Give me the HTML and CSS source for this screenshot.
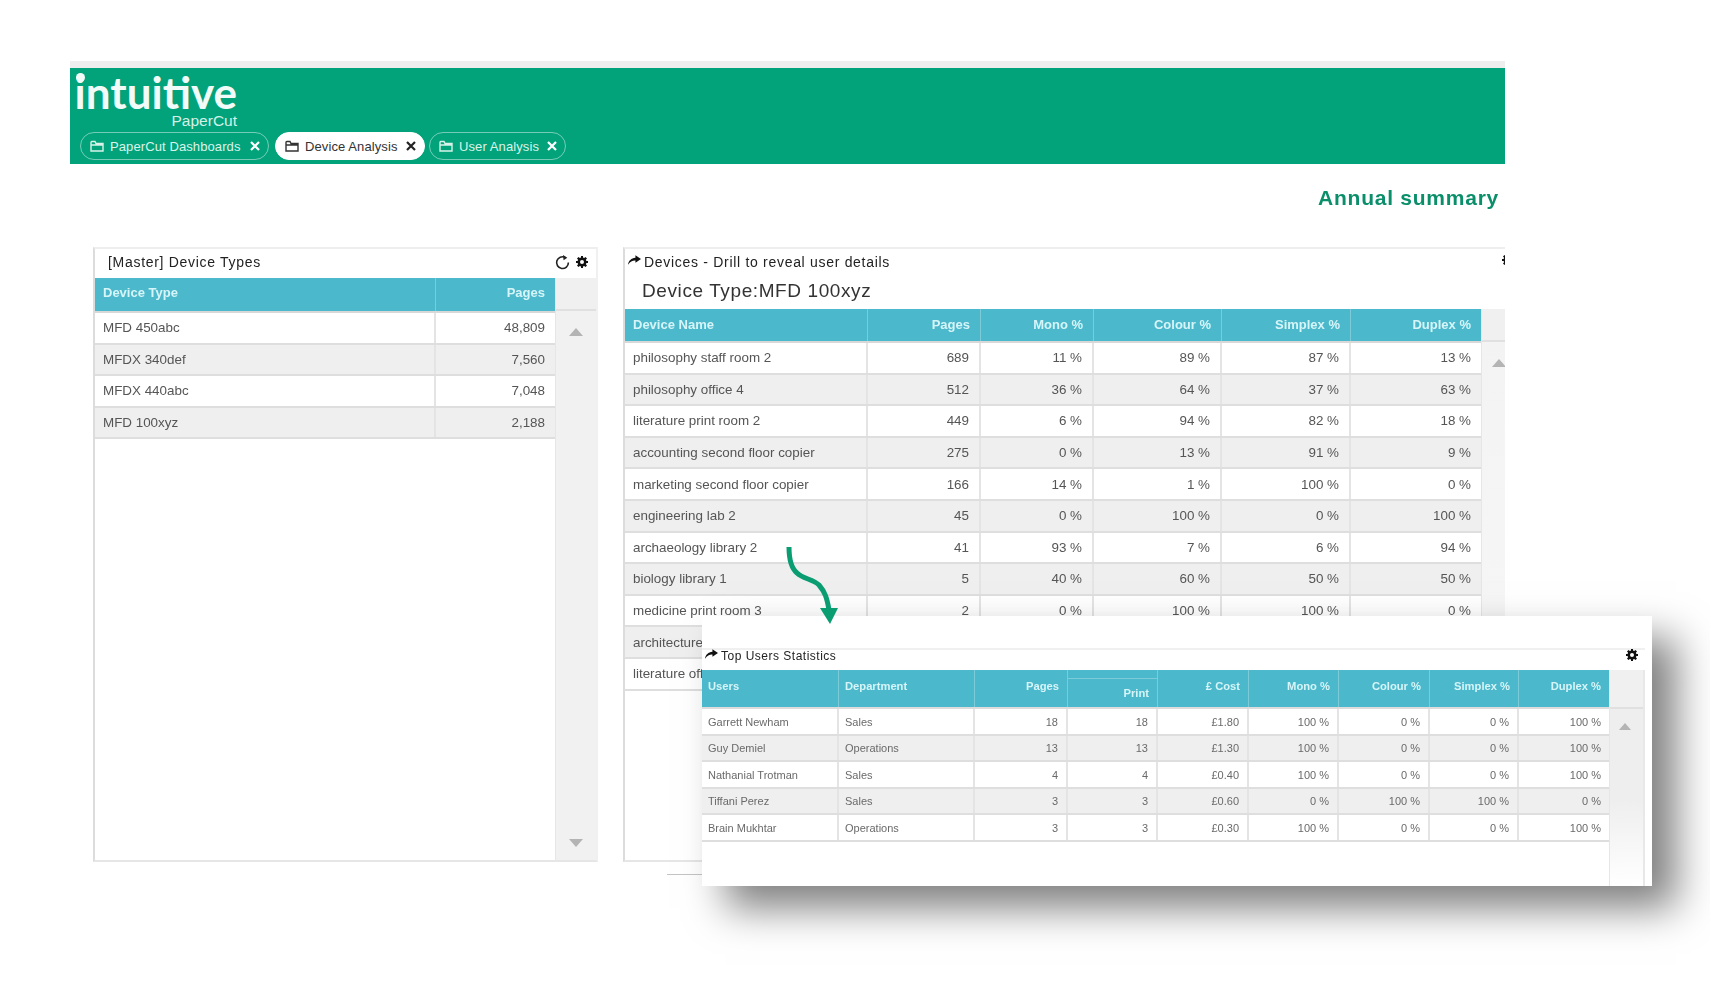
FILE: index.html
```html
<!DOCTYPE html>
<html lang="en">
<head>
<meta charset="utf-8">
<title>Intuitive PaperCut - Device Analysis</title>
<link rel="stylesheet" href="styles.css">
</head>
<body>
<svg class="defs" width="0" height="0" aria-hidden="true">
  <symbol id="folder" viewBox="0 0 14 12"><path d="M1 2.5V11h12V3.5H6L5 1.5H1.8Q1 1.5 1 2.5ZM1 5h12" fill="none" stroke="currentColor" stroke-width="1.4"/></symbol>
  <symbol id="close" viewBox="0 0 12 12"><path d="M2 2l8 8M10 2l-8 8" fill="none" stroke="currentColor" stroke-width="2.2"/></symbol>
  <symbol id="gear" viewBox="0 0 12 12"><path fill-rule="evenodd" d="M5 0h2v1.6l1.2.5L9.5 1 11 2.5 9.9 3.8l.5 1.2H12v2h-1.6l-.5 1.2L11 9.5 9.5 11 8.2 9.9 7 10.4V12H5v-1.6l-1.2-.5L2.500 11 1 9.500l1.100-1.300L1.600 7H0V5h1.600l.5-1.200L1 2.500 2.500 1l1.300 1.100L5 1.600ZM6 4a2 2 0 1 0 0 4 2 2 0 0 0 0-4Z" fill="currentColor"/></symbol>
  <symbol id="reply" viewBox="0 0 14 10"><path d="M8 0l6 4-6 4V5.500C5 5.300 2.500 6.500 0 10 .6 5.800 3.500 2.800 8 2.500Z" fill="currentColor"/></symbol>
  <symbol id="up" viewBox="0 0 14 8"><path d="M7 0l7 8H0Z" fill="currentColor"/></symbol>
  <symbol id="down" viewBox="0 0 14 8"><path d="M0 0h14L7 8Z" fill="currentColor"/></symbol>
</svg>

<main class="page">
  <div class="stripe"></div>
  <header class="banner">
    <div class="logo">
      <span class="logo-word">intuitive</span>
      <span class="logo-sub">PaperCut</span>
    </div>
    <nav class="tabs">
      <a class="tab tab-dash"><svg class="ico-folder"><use href="#folder"/></svg><span class="tab-label">PaperCut Dashboards</span><svg class="ico-close"><use href="#close"/></svg></a>
      <a class="tab tab-device active"><svg class="ico-folder"><use href="#folder"/></svg><span class="tab-label">Device Analysis</span><svg class="ico-close"><use href="#close"/></svg></a>
      <a class="tab tab-user"><svg class="ico-folder"><use href="#folder"/></svg><span class="tab-label">User Analysis</span><svg class="ico-close"><use href="#close"/></svg></a>
    </nav>
  </header>

  <h1 class="summary">Annual summary</h1>

  <div class="panels">
    <section class="panel panel-types">
      <div class="panel-title title-types">
        <span class="title-text">[Master] Device Types</span>
        <span class="panel-tools">
          <svg class="ico-refresh" viewBox="0 0 14 14"><path d="M9.500 2.200A5.500 5.500 0 1 0 12.500 7" fill="none" stroke="currentColor" stroke-width="1.500"/><path d="M7.500 0l4 2.500-3.500 2.500Z" fill="currentColor"/></svg>
          <svg class="ico-gear"><use href="#gear"/></svg>
        </span>
      </div>
      <div class="panel-body">
        <div class="table">
          <div class="row head cols-types"><span>Device Type</span><span class="num">Pages</span></div>
          <div class="rows big">
            <div class="row cols-types"><span>MFD 450abc</span><span class="num">48,809</span></div>
            <div class="row cols-types"><span>MFDX 340def</span><span class="num">7,560</span></div>
            <div class="row cols-types"><span>MFDX 440abc</span><span class="num">7,048</span></div>
            <div class="row cols-types"><span>MFD 100xyz</span><span class="num">2,188</span></div>
          </div>
        </div>
        <aside class="scroll scroll-types">
          <div class="scroll-head head-types"></div>
          <svg class="arrow-up arrow-types"><use href="#up"/></svg>
          <svg class="arrow-down"><use href="#down"/></svg>
        </aside>
      </div>
    </section>

    <section class="panel panel-devices">
      <div class="panel-title title-devices">
        <svg class="ico-reply"><use href="#reply"/></svg>
        <span class="title-text">Devices - Drill to reveal user details</span>
        <svg class="ico-gear gear-clipped"><use href="#gear"/></svg>
      </div>
      <h2 class="subtitle">Device Type:MFD 100xyz</h2>
      <div class="panel-body">
        <div class="table">
          <div class="row head cols-devices"><span>Device Name</span><span class="num">Pages</span><span class="num">Mono %</span><span class="num">Colour %</span><span class="num">Simplex %</span><span class="num">Duplex %</span></div>
          <div class="rows big">
            <div class="row cols-devices"><span>philosophy staff room 2</span><span class="num">689</span><span class="num">11 %</span><span class="num">89 %</span><span class="num">87 %</span><span class="num">13 %</span></div>
            <div class="row cols-devices"><span>philosophy office 4</span><span class="num">512</span><span class="num">36 %</span><span class="num">64 %</span><span class="num">37 %</span><span class="num">63 %</span></div>
            <div class="row cols-devices"><span>literature print room 2</span><span class="num">449</span><span class="num">6 %</span><span class="num">94 %</span><span class="num">82 %</span><span class="num">18 %</span></div>
            <div class="row cols-devices"><span>accounting second floor copier</span><span class="num">275</span><span class="num">0 %</span><span class="num">13 %</span><span class="num">91 %</span><span class="num">9 %</span></div>
            <div class="row cols-devices"><span>marketing second floor copier</span><span class="num">166</span><span class="num">14 %</span><span class="num">1 %</span><span class="num">100 %</span><span class="num">0 %</span></div>
            <div class="row cols-devices"><span>engineering lab 2</span><span class="num">45</span><span class="num">0 %</span><span class="num">100 %</span><span class="num">0 %</span><span class="num">100 %</span></div>
            <div class="row cols-devices"><span>archaeology library 2</span><span class="num">41</span><span class="num">93 %</span><span class="num">7 %</span><span class="num">6 %</span><span class="num">94 %</span></div>
            <div class="row cols-devices"><span>biology library 1</span><span class="num">5</span><span class="num">40 %</span><span class="num">60 %</span><span class="num">50 %</span><span class="num">50 %</span></div>
            <div class="row cols-devices"><span>medicine print room 3</span><span class="num">2</span><span class="num">0 %</span><span class="num">100 %</span><span class="num">100 %</span><span class="num">0 %</span></div>
            <div class="row cols-devices"><span>architecture</span><span class="num"></span><span class="num"></span><span class="num"></span><span class="num"></span><span class="num"></span></div>
            <div class="row cols-devices"><span>literature office</span><span class="num"></span><span class="num"></span><span class="num"></span><span class="num"></span><span class="num"></span></div>
          </div>
        </div>
        <aside class="scroll scroll-devices">
          <div class="scroll-head head-devices"></div>
          <svg class="arrow-up arrow-devices"><use href="#up"/></svg>
        </aside>
      </div>
    </section>
  </div>

  <svg class="flow-arrow" viewBox="0 0 60 84" aria-hidden="true">
    <path d="M5 1C5 14 7 22 13 27 19 33 29 33 35 39 41 46 43 52 45 64" fill="none" stroke="#0a9d72" stroke-width="5"/>
    <path d="M36 62h18l-8 16Z" fill="#0a9d72"/>
  </svg>
  <div class="stub-line"></div>

  <section class="popup">
    <div class="popup-gap"></div>
    <div class="popup-inner">
      <div class="panel-title title-popup">
        <svg class="ico-reply"><use href="#reply"/></svg>
        <span class="title-text">Top Users Statistics</span>
        <svg class="ico-gear gear-popup"><use href="#gear"/></svg>
      </div>
      <div class="panel-body popup-body">
        <div class="table">
          <div class="row head head-users cols-users"><span>Users</span><span>Department</span><span class="num">Pages</span><span class="num print-head">Print</span><span class="num">£ Cost</span><span class="num">Mono %</span><span class="num">Colour %</span><span class="num">Simplex %</span><span class="num">Duplex %</span></div>
          <div class="rows small">
            <div class="row cols-users"><span>Garrett Newham</span><span>Sales</span><span class="num">18</span><span class="num">18</span><span class="num">£1.80</span><span class="num">100 %</span><span class="num">0 %</span><span class="num">0 %</span><span class="num">100 %</span></div>
            <div class="row cols-users"><span>Guy Demiel</span><span>Operations</span><span class="num">13</span><span class="num">13</span><span class="num">£1.30</span><span class="num">100 %</span><span class="num">0 %</span><span class="num">0 %</span><span class="num">100 %</span></div>
            <div class="row cols-users"><span>Nathanial Trotman</span><span>Sales</span><span class="num">4</span><span class="num">4</span><span class="num">£0.40</span><span class="num">100 %</span><span class="num">0 %</span><span class="num">0 %</span><span class="num">100 %</span></div>
            <div class="row cols-users"><span>Tiffani Perez</span><span>Sales</span><span class="num">3</span><span class="num">3</span><span class="num">£0.60</span><span class="num">0 %</span><span class="num">100 %</span><span class="num">100 %</span><span class="num">0 %</span></div>
            <div class="row cols-users"><span>Brain Mukhtar</span><span>Operations</span><span class="num">3</span><span class="num">3</span><span class="num">£0.30</span><span class="num">100 %</span><span class="num">0 %</span><span class="num">0 %</span><span class="num">100 %</span></div>
          </div>
        </div>
        <aside class="scroll scroll-popup">
          <div class="scroll-head head-popup"></div>
          <svg class="arrow-up arrow-popup"><use href="#up"/></svg>
        </aside>
      </div>
    </div>
  </section>
</main>
</body>
</html>
```
FILE: styles.css
```css
* { box-sizing: border-box; }
html, body { margin: 0; padding: 0; background: #fff; overflow: hidden; }
body { width: 1710px; height: 1001px; font-family: "Liberation Sans", Arial, sans-serif; color: #333; }
.defs { position: absolute; }

.page { position: relative; width: 1710px; height: 1001px; padding: 61px 205px 0 70px; filter: blur(0.6px); }
.stripe { height: 7px; background: #eeeeee; }

.banner { height: 96px; background: #02a37b; padding: 6px 0 0 4px; display: flex; flex-direction: column; }
.logo { width: 163px; height: 58px; display: flex; flex-direction: column; align-items: flex-end; color: #f2fbf8; }
.logo-word { position: relative; font-family: "Lato", sans-serif; font-weight: 700; font-size: 44px; line-height: 36px; letter-spacing: 0; }
.logo-word::before { content: ""; position: absolute; left: 1px; top: -1px; width: 9px; height: 9px; border-radius: 50%; background: #f2fbf8; }
.logo-sub { font-size: 15.5px; line-height: 16px; margin-top: 3px; color: #d4f1e8; }

.tabs { display: flex; gap: 6px; padding-left: 6px; }
.tab { height: 28px; border: 1.5px solid rgba(255,255,255,.45); border-radius: 14px; display: flex; align-items: center; padding: 0 7px 0 9px; color: #d9f3ea; font-size: 13px; }
.tab.active { background: #fff; border-color: #fff; color: #333; }
.tab-dash { width: 189px; }
.tab-device { width: 150px; }
.tab-user { width: 137px; margin-left: -2px; }
.ico-folder { width: 14px; height: 12px; margin-right: 6px; flex: none; }
.tab-label { flex: 1; white-space: nowrap; letter-spacing: 0.1px; }
.ico-close { width: 12px; height: 12px; flex: none; }
.tab .ico-close { color: #fff; }
.tab.active .ico-close { color: #222; }

.summary { margin: 21px 6px 0 0; height: 62px; text-align: right; font-size: 21px; line-height: 26px; font-weight: 700; letter-spacing: 0.75px; color: #0b8f6b; }

.panels { display: flex; gap: 25px; padding-left: 23px; }
.panel { height: 615px; background: #fff; border-top: 2px solid #eeeeee; border-left: 2px solid #dcdcdc; border-bottom: 2px solid #e6e6e6; overflow: hidden; display: flex; flex-direction: column; }
.panel-types { width: 505px; border-right: 2px solid #f0f0f0; }
.panel-devices { width: 882px; }

.panel-title { flex: none; display: flex; align-items: center; color: #222; font-size: 14px; }
.title-text { flex: 1; letter-spacing: 0.7px; }
.title-types { height: 29px; padding: 0 8px 3px 13px; }
.title-devices { height: 27px; padding: 0 0 2px 3px; }
.panel-tools { display: flex; align-items: center; gap: 6px; }
.ico-refresh { width: 15px; height: 15px; color: #222; }
.ico-gear { width: 12px; height: 12px; color: #111; flex: none; }
.gear-clipped { margin: -4px -9px 0 0; }
.ico-reply { width: 13px; height: 10px; margin: -4px 3px 0 0; color: #111; flex: none; }

.subtitle { flex: none; margin: 0; height: 33px; padding: 0 0 0 17px; font-size: 19px; line-height: 30px; font-weight: 400; color: #333; letter-spacing: 0.6px; }

.panel-body { flex: 1; display: flex; min-height: 0; }
.table { flex: none; }
.row { display: grid; align-items: center; border-bottom: 2px solid #dedede; }
.rows .row:nth-child(even) { background: #efefef; }
.row > span { padding: 0 10px 0 8px; height: 100%; display: flex; align-items: center; white-space: nowrap; overflow: hidden; border-right: 2px solid #e4e4e4; }
.row > span:last-child { border-right: 0; }
.num { justify-content: flex-end; }

.head { background: #4cb8cb; color: #d6f5f8; font-weight: 700; font-size: 13px; border-bottom: 2px solid #d8d8d8; }
.head > span { border-right: 1px solid #7ccbd9; padding-bottom: 2px; }

.big .row { height: 31.6px; font-size: 13.4px; color: #555; }
.panel-devices .head { height: 34px; }
.panel-types .head { height: 35px; }
.panel-types .head > span { padding-bottom: 4px; }

.cols-types { grid-template-columns: 341px 119px; width: 460px; }
.cols-devices { grid-template-columns: 243px 113px 113px 128px 129px 130px; width: 856px; }
.cols-users { grid-template-columns: 137px 136px 93px 90px 91px 90px 91px 89px 90px; width: 907px; }

.scroll { flex: 1; position: relative; background: #f1f1f1; border-left: 1px solid #e6e6e6; color: #b4b4b4; }
.scroll-head { height: 33px; background: #f0f0f0; border-bottom: 2px solid #e0e0e0; }
.arrow-up, .arrow-down { position: absolute; width: 14px; height: 8px; }
.arrow-types { left: 13px; top: 50px; }
.arrow-down { left: 13px; top: 561px; }
.arrow-devices { left: 10px; top: 50px; }
.scroll-devices { background: linear-gradient(#f3f3f3, #f8f8f8); }

.flow-arrow { position: absolute; left: 784px; top: 546px; width: 60px; height: 84px; z-index: 3; }
.stub-line { position: absolute; left: 667px; top: 874px; width: 36px; height: 1px; background: #c4c4c4; }

.popup { position: absolute; left: 702px; top: 616px; width: 950px; height: 270px; background: #fff; box-shadow: 24px 22px 38px rgba(0,0,0,.5); z-index: 2; display: flex; flex-direction: column; padding-right: 7px; }
.popup-gap { height: 32px; flex: none; }
.popup-inner { flex: 1; display: flex; flex-direction: column; border-top: 2px solid #f0f0f0; min-height: 0; }
.title-popup { height: 20px; font-size: 12px; font-weight: 400; padding: 0 0 9px 3px; color: #222; }
.title-popup .title-text { letter-spacing: 0.5px; }
.title-popup .ico-reply { margin-top: -3px; }
.gear-popup { margin: -2px 7px 0 0; }
.head-users { height: 39px; font-size: 11.2px; border-bottom: 2px solid #dcdcdc; }
.head-users > span { padding: 0 8px 5px 6px; }
.head-users .print-head { padding: 8px 8px 0 6px; box-shadow: inset 0 8px 0 #4cb8cb, inset 0 9px 0 #7ccbd9; }
.small .row { height: 26.5px; font-size: 11px; color: #6a6a6a; }
.small .row > span { padding: 1px 8px 0 6px; }
.scroll-popup { background: linear-gradient(#eeeeee 60%, #fff); border-right: 2px solid #e8e8e8; }
.head-popup { height: 39px; }
.arrow-popup { left: 9px; top: 53px; width: 12px; height: 7px; }
```
